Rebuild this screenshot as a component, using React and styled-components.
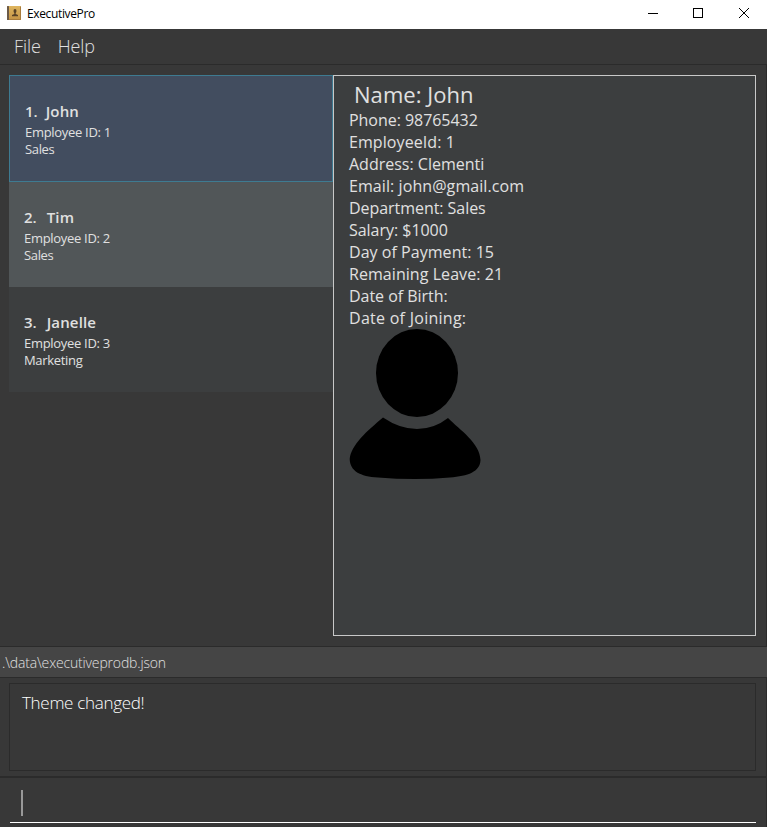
import React from 'react';
import styled, { createGlobalStyle } from 'styled-components';

const GlobalStyle = createGlobalStyle`
  * { box-sizing: border-box; }
  body {
    margin: 0;
    background: #383838;
    font-family: "Open Sans", "Noto Sans", sans-serif;
  }
`;

const Window = styled.div`
  width: 767px;
  height: 827px;
  display: flex;
  flex-direction: column;
  overflow: hidden;
  background: #383838;
  color: #e0e0e0;
`;

const TitleBar = styled.header`
  height: 29px;
  flex: none;
  display: flex;
  align-items: flex-start;
  background: #fff;
  color: #000;
`;

const AppIcon = styled.svg`
  width: 15px;
  height: 15px;
  margin: 6px 5px 0 7px;
`;

const WindowTitle = styled.div`
  flex: 1;
  font-size: 12px;
  line-height: 16px;
  padding-top: 6px;
  letter-spacing: -0.36px;
`;

const WindowButton = styled.svg`
  width: 46px;
  height: 29px;
  fill: none;
  stroke: #000;
  stroke-width: 1;
`;

const MenuBar = styled.nav`
  height: 36px;
  flex: none;
  display: flex;
  gap: 17px;
  padding: 4px 0 0 14px;
  border-bottom: 1px solid #2b2b2b;
`;

const MenuItem = styled.div`
  font-size: 18px;
  font-weight: 300;
  line-height: 26px;
  letter-spacing: -0.1px;
`;

const Main = styled.main`
  height: 581px;
  flex: none;
  display: flex;
  padding: 10px 10px 10px 9px;
  border-right: 1px solid #2b2b2b;
`;

const EmployeeList = styled.div`
  width: 324px;
  flex: none;
`;

const cardColors = { selected: '#424d5f', even: '#515658', odd: '#3c3e3f' };

const Card = styled.article`
  height: ${(p) => (p.$tone === 'selected' ? 107 : 105)}px;
  padding: 23px 0 0 15px;
  border: ${(p) => (p.$tone === 'selected' ? '1px solid #3e7b91' : '0')};
  background: ${(p) => cardColors[p.$tone]};
`;

const CardHeading = styled.h2`
  display: flex;
  gap: ${(p) => p.$gap}px;
  margin: 0 0 1px;
  font-size: 15px;
  font-weight: 600;
  line-height: 24px;
`;

const CardName = styled.span`
  letter-spacing: 0.15px;
`;

const CardLine = styled.div`
  font-size: 13px;
  line-height: 17px;
  letter-spacing: ${(p) => p.$spacing}px;
`;

const Detail = styled.section`
  flex: 1;
  padding: 3px 15px;
  border: 1px solid #c8c8c8;
  background: #3c3e3f;
`;

const DetailName = styled.h1`
  margin: 0;
  padding-left: 5px;
  font-size: 22px;
  font-weight: 400;
  line-height: 30px;
  letter-spacing: 0.05px;
`;

const DetailLine = styled.div`
  font-size: 16px;
  line-height: 22px;
  letter-spacing: ${(p) => p.$spacing}px;
`;

const Avatar = styled.svg`
  display: block;
  width: 134px;
  height: 152px;
`;

const StatusBar = styled.div`
  height: 32px;
  flex: none;
  padding: 4px 2px;
  border: solid #2b2b2b;
  border-width: 1px 0;
  background: #454545;
  font-size: 14px;
  font-weight: 300;
  line-height: 24px;
  letter-spacing: -0.16px;
`;

const ResultPane = styled.div`
  height: 98px;
  flex: none;
  padding: 5px 10px 5px 9px;
  border-right: 1px solid #2b2b2b;
`;

const ResultBox = styled.div`
  height: 88px;
  padding: 7px 12px;
  border: 1px solid #2b2b2b;
  color: #fff;
  font-size: 17px;
  font-weight: 300;
  line-height: 24px;
  letter-spacing: -0.3px;
`;

const CommandPane = styled.div`
  height: 51px;
  flex: none;
  padding: 0 10px;
  border-top: 2px solid #2b2b2b;
  border-right: 1px solid #2b2b2b;
`;

const CommandInput = styled.div`
  height: 45px;
  padding: 12px 0 0 11px;
  border-bottom: 1px solid #fff;
`;

const Caret = styled.div`
  width: 2px;
  height: 26px;
  background: #999;
`;

const employees = [
  { no: '1.', name: 'John', id: 1, dept: 'Sales', tone: 'selected', gap: 8, spacing: -0.35 },
  { no: '2.', name: 'Tim', id: 2, dept: 'Sales', tone: 'even', gap: 10, spacing: -0.35 },
  { no: '3.', name: 'Janelle', id: 3, dept: 'Marketing', tone: 'odd', gap: 10, spacing: -0.32 },
];

const details = [
  ['Phone: 98765432', -0.04],
  ['EmployeeId: 1', 0.08],
  ['Address: Clementi', 0],
  ['Email: john@gmail.com', 0.08],
  ['Department: Sales', -0.05],
  ['Salary: $1000', -0.03],
  ['Day of Payment: 15', 0.04],
  ['Remaining Leave: 21', 0.06],
  ['Date of Birth:', -0.04],
  ['Date of Joining:', 0.27],
];

export default function App() {
  return (
    <Window>
      <GlobalStyle />
      <TitleBar>
        <AppIcon viewBox="0 0 15 15">
          <defs>
            <linearGradient id="cover" x1="0" y1="0" x2="0" y2="1">
              <stop offset="0" stopColor="#dfb65f" />
              <stop offset="1" stopColor="#c49345" />
            </linearGradient>
          </defs>
          <rect width="14" height="14" rx="0.6" fill="url(#cover)" />
          <path d="M0.5 13.5H13.5V0.5" fill="none" stroke="#a97c3c" />
          <rect width="2" height="14" rx="0.5" fill="#6b5a48" />
          <ellipse cx="8" cy="5" rx="1.5" ry="1.9" fill="#594226" />
          <path d="M7.300 6h1.400v2l2.300 0.900V10.300H5V8.900L7.300 8z" fill="#594226" />
        </AppIcon>
        <WindowTitle>ExecutivePro</WindowTitle>
        <WindowButton viewBox="0 0 46 29">
          <path d="M19 13.5h10" />
        </WindowButton>
        <WindowButton viewBox="0 0 46 29">
          <rect x="18.5" y="8.5" width="9" height="9" />
        </WindowButton>
        <WindowButton viewBox="0 0 46 29">
          <path d="M18 8l10 10M28 8l-10 10" />
        </WindowButton>
      </TitleBar>
      <MenuBar>
        <MenuItem>File</MenuItem>
        <MenuItem>Help</MenuItem>
      </MenuBar>
      <Main>
        <EmployeeList>
          {employees.map((e) => (
            <Card key={e.id} $tone={e.tone}>
              <CardHeading $gap={e.gap}>
                <span>{e.no}</span>
                <CardName>{e.name}</CardName>
              </CardHeading>
              <CardLine $spacing={-0.3}>Employee ID: {e.id}</CardLine>
              <CardLine $spacing={e.spacing}>{e.dept}</CardLine>
            </Card>
          ))}
        </EmployeeList>
        <Detail>
          <DetailName>Name: John</DetailName>
          {details.map(([text, spacing]) => (
            <DetailLine key={text} $spacing={spacing}>{text}</DetailLine>
          ))}
          <Avatar viewBox="349 329 134 152">
            <ellipse cx="417" cy="373" rx="41" ry="44" />
            <path d="M383 417.5Q400 429 417 429Q434 429 448 418C460 430 480 443 480.5 460C480 472 468 476 450 477.5Q415 480.500 378 477.500C360 476.500 350 471 349.700 459C351 445 367 431 383 417.500Z" />
          </Avatar>
        </Detail>
      </Main>
      <StatusBar>.\data\executiveprodb.json</StatusBar>
      <ResultPane>
        <ResultBox>Theme changed!</ResultBox>
      </ResultPane>
      <CommandPane>
        <CommandInput>
          <Caret />
        </CommandInput>
      </CommandPane>
    </Window>
  );
}
